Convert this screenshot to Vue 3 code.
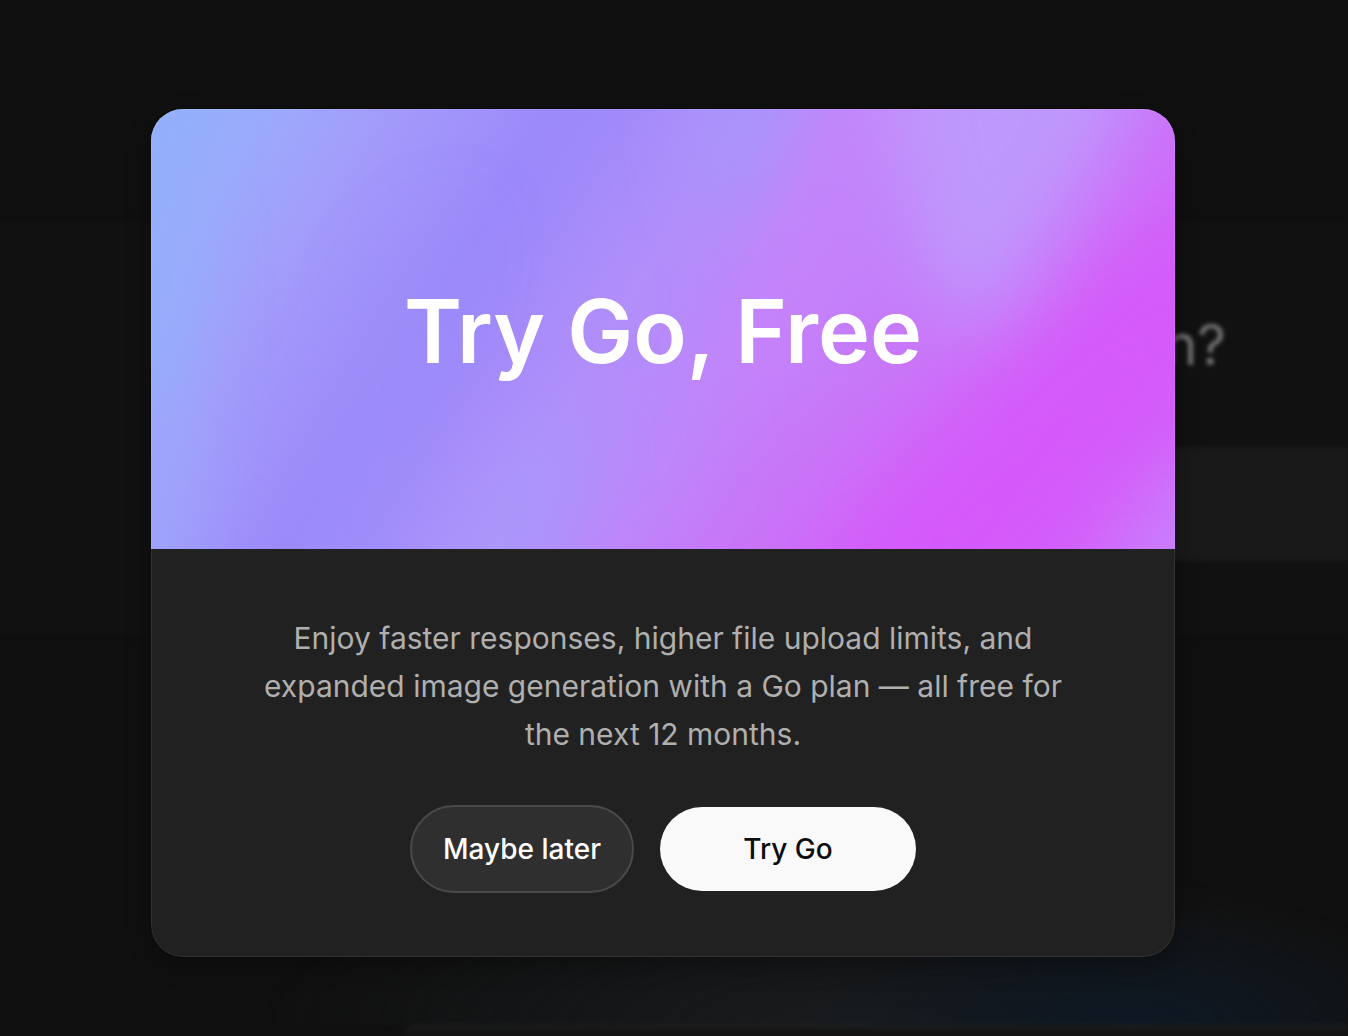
<script setup>
import { ref } from 'vue'

const open = ref(true)
</script>

<template>
  <div class="screen">
    <div class="page" aria-hidden="true">
      <div class="band">
        <p class="greeting">n?</p>
        <div class="prompt"></div>
      </div>
      <div class="glow"></div>
      <div class="sheet"></div>
    </div>

    <div v-if="open" class="overlay">
      <section class="dialog" role="dialog" aria-modal="true" aria-labelledby="offer-title">
        <header class="hero">
          <svg class="art" viewBox="0 0 1024 440" preserveAspectRatio="none" aria-hidden="true">
            <defs>
              <linearGradient id="base" gradientUnits="userSpaceOnUse" x1="0" y1="0" x2="868" y2="525">
                <stop offset="0" stop-color="#90b3f9" />
                <stop offset="0.09" stop-color="#9bacfc" />
                <stop offset="0.2" stop-color="#a39bfa" />
                <stop offset="0.34" stop-color="#9c89fa" />
                <stop offset="0.39" stop-color="#a08afa" />
                <stop offset="0.5" stop-color="#b28ffa" />
                <stop offset="0.62" stop-color="#be86fa" />
                <stop offset="0.74" stop-color="#c879f9" />
                <stop offset="1" stop-color="#d068fa" />
              </linearGradient>
              <filter id="soft" x="-50%" y="-50%" width="200%" height="200%">
                <feGaussianBlur stdDeviation="36" />
              </filter>
            </defs>
            <rect width="1024" height="440" fill="url(#base)" />
            <g filter="url(#soft)">
              <path d="M-90-40H20L40 180 0 520H-90Z" fill="#95aefb" />
              <path d="M-90 300H60L20 540H-90Z" fill="#9da4fb" />
              <path d="M240 160L320 100 220 500H110Z" fill="#9b8ffa" opacity=".7" />
              <path d="M580-70H690L650 30 580 130 540 30Z" fill="#a894fa" />
              <path d="M670-60H750L700 120 630 270 560 320 620 120Z" fill="#cb80f9" opacity=".7" />
              <path d="M730-80H1020L930 80 830 220 770 170 750 60Z" fill="#be9afc" opacity=".95" />
              <path d="M330 350L460 300 380 520H230Z" fill="#a59afb" opacity=".7" />
              <path d="M620 300L720 260 620 520H480Z" fill="#c96ff8" opacity=".5" />
              <path d="M1120 60L1100 290 960 420 880 520H600L720 350 850 240 970 120Z" fill="#d45bf9" opacity=".8" />
              <path d="M1080 120L1020 230 800 520H650L800 370 940 220Z" fill="#d64ffa" opacity=".45" />
              <path d="M1120 290V540H940L980 420Z" fill="#c784fd" opacity=".85" />
            </g>
          </svg>
          <h1 id="offer-title">Try Go, Free</h1>
        </header>
        <div class="body">
          <p class="copy">
            Enjoy faster responses, higher file upload limits, and expanded image generation with a
            Go plan — all free for the next 12 months.
          </p>
          <div class="actions">
            <button type="button" class="later" @click="open = false">Maybe later</button>
            <button type="button" class="try">Try Go</button>
          </div>
        </div>
      </section>
    </div>
  </div>
</template>

<style>
body {
  margin: 0;
  background: #101010;
}
</style>

<style scoped>
.screen {
  position: relative;
  min-height: 100vh;
  overflow: hidden;
  background: #101010;
  font-family: Inter, "Liberation Sans", sans-serif;
}

.page {
  position: absolute;
  inset: 0;
  display: flex;
  flex-direction: column;
  overflow: hidden;
  filter: blur(2px);
}

.band {
  box-sizing: border-box;
  height: 420px;
  margin-top: 218px;
  flex-shrink: 0;
  padding-top: 90px;
  border-top: 1px solid #0d0d0d;
  border-bottom: 1px solid #0d0d0d;
  background: #111111;
}

.greeting {
  margin: 0 122px 66px 0;
  color: #757575;
  font-size: 56px;
  line-height: 72px;
  text-align: right;
}

.prompt {
  height: 114px;
  margin: 0 -8px 0 50%;
  background: #191919;
}

.glow {
  flex: 1;
  background:
    radial-gradient(ellipse 320px 120px at 84% 100%, #0e1824, transparent),
    radial-gradient(ellipse 600px 170px at 64% 100%, #191c1e, transparent);
}

.sheet {
  height: 8px;
  flex-shrink: 0;
  margin: 0 -8px 0 30%;
  border-top: 3px solid #1d1e1f;
  border-top-left-radius: 24px;
  background: #151515;
}

.overlay {
  position: relative;
  box-sizing: border-box;
  min-height: 100vh;
  display: grid;
  grid-template-columns: minmax(0, 1024px);
  justify-content: center;
  align-content: center;
  padding: 40px 32px 10px 10px;
}

.dialog {
  position: relative;
  overflow: hidden;
  border-radius: 32px;
  background: #212121;
  box-shadow: 0 8px 24px rgba(0, 0, 0, 0.32);
}

.dialog::after {
  content: "";
  position: absolute;
  inset: 0;
  border: 1px solid rgba(255, 255, 255, 0.08);
  border-radius: inherit;
  pointer-events: none;
}

.hero {
  display: grid;
  height: 440px;
}

.art,
.hero h1 {
  grid-area: 1 / 1;
}

.art {
  width: 100%;
  height: 440px;
}

.hero h1 {
  z-index: 1;
  place-self: center;
  margin: 0;
  padding-top: 4px;
  color: #fff;
  font-size: 88px;
  font-weight: 600;
  line-height: 112px;
}

.body {
  display: flex;
  flex-direction: column;
  align-items: center;
  gap: 47px;
  padding: 65px 64px 64px;
}

.copy {
  max-width: 824px;
  margin: 0;
  color: #afafaf;
  font-size: 30px;
  line-height: 48px;
  text-align: center;
}

.actions {
  display: flex;
  align-items: center;
  gap: 26px;
}

button {
  box-sizing: border-box;
  padding: 0;
  border-radius: 44px;
  font: 500 28px/40px Inter, "Liberation Sans", sans-serif;
  cursor: pointer;
}

.later {
  width: 224px;
  height: 88px;
  border: 2px solid #4a4a4a;
  background: #2f2f2f;
  color: #fff;
}

.try {
  width: 256px;
  height: 84px;
  border: 0;
  background: #f9f9f9;
  color: #0d0d0d;
}
</style>
